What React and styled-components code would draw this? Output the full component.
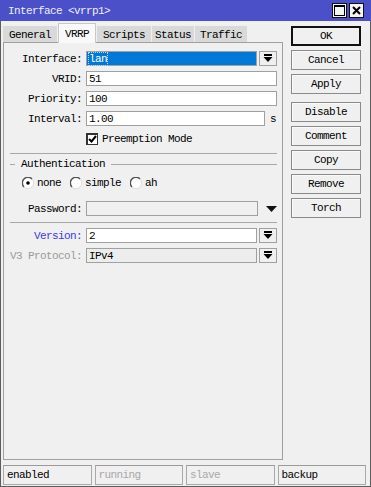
import React from "react";
import styled, { createGlobalStyle } from "styled-components";

const GlobalStyle = createGlobalStyle`
  html, body {
    margin: 0;
    padding: 0;
    background: #f0f0f0;
  }
  * {
    box-sizing: border-box;
  }
`;

const Window = styled.div`
  width: 371px;
  height: 487px;
  display: flex;
  flex-direction: column;
  background: #f0f0f0;
  border: 1px solid #5c5c5c;
  border-top: none;
  font-family: "Liberation Mono", "DejaVu Sans Mono", monospace;
  font-size: 11px;
  letter-spacing: -0.6px;
  color: #000;
`;

const TitleBar = styled.div`
  height: 21px;
  margin: 0 -1px;
  background: #4b50c9;
  color: #eef0ff;
  display: flex;
  align-items: center;
  padding: 0 7px 0 8px;
  font-size: 11px;
`;

const TitleText = styled.div`
  flex: 1;
`;

const TitleButtons = styled.div`
  display: flex;
  gap: 2px;
`;

const TitleButton = styled.div`
  width: 15px;
  height: 15px;
  border: 1px solid #111;
  background: #f4f4f4;
  display: flex;
  align-items: center;
  justify-content: center;
`;

const Main = styled.div`
  height: 441px;
  display: flex;
  padding: 2px 0 0 2px;
`;

const LeftCol = styled.div`
  width: 280px;
  display: flex;
  flex-direction: column;
`;

const Tabs = styled.div`
  height: 19px;
  display: flex;
  align-items: flex-end;
  gap: 1px;
  position: relative;
  z-index: 1;
`;

const Tab = styled.div`
  height: ${(p) => (p.$active ? "20px" : "16px")};
  margin-bottom: ${(p) => (p.$active ? "-1px" : "0")};
  padding: 0 ${(p) => p.$pad}px;
  display: flex;
  align-items: center;
  background: ${(p) => (p.$active ? "#f9f9f9" : "#d9d9d9")};
  border: ${(p) => (p.$active ? "1px solid #c8c8c8" : "none")};
  border-bottom: none;
  padding-top: ${(p) => (p.$active ? "0" : "1px")};
`;

const Panel = styled.div`
  height: 418px;
  border: 1px solid #a0a0a0;
  padding: 8px 5px 0 0;
`;

const Row = styled.div`
  display: flex;
  align-items: center;
  height: 15px;
  margin-top: ${(p) => p.$mt ?? 5}px;
`;

const Label = styled.div`
  width: 78px;
  margin-right: 4px;
  text-align: right;
  white-space: nowrap;
  color: ${(p) => p.$color || "#000"};
`;

const Input = styled.div`
  flex: 1;
  height: 15px;
  border: 1px solid #a0a0a0;
  background: ${(p) => p.$bg || "#fff"};
  color: ${(p) => (p.$selected ? "#fff" : "#000")};
  display: flex;
  align-items: center;
  padding-left: 2px;
  white-space: nowrap;
`;

const Selection = styled.span`
  background: #0078d7;
  flex: 1;
  height: 100%;
  display: flex;
  align-items: center;
  padding-left: 2px;
  margin-left: -2px;
`;

const Focus = styled.span`
  outline: 1px dotted #bcd6f0;
  outline-offset: 0;
`;

const DropButton = styled.div`
  width: 18px;
  height: 15px;
  margin-left: 2px;
  border: 1px solid #a0a0a0;
  background: #f0f0f0;
  display: flex;
  align-items: center;
  justify-content: center;
`;

const Unit = styled.div`
  width: 12px;
  text-align: right;
  padding-right: 1px;
`;

const TriangleSlot = styled.div`
  width: 19px;
  display: flex;
  justify-content: flex-end;
  align-items: center;
`;

const CheckRow = styled.div`
  display: flex;
  align-items: center;
  height: 15px;
  margin-top: 5px;
  padding-left: 82px;
  gap: 4px;
`;

const CheckBox = styled.div`
  width: 12px;
  height: 12px;
  border: 1px solid #333;
  border-top-width: 2px;
  border-left-width: 2px;
  background: #fff;
  display: flex;
  align-items: center;
  justify-content: center;
`;

const Separator = styled.div`
  height: 1px;
  background: #a8a8a8;
  margin: ${(p) => p.$mt}px 0 0 6px;
`;

const GroupHeader = styled.div`
  display: flex;
  align-items: center;
  height: 12px;
  margin-top: 4px;
  margin-left: 6px;
  gap: 6px;
`;

const GroupLine = styled.div`
  height: 1px;
  background: #a8a8a8;
  width: ${(p) => (p.$w ? `${p.$w}px` : "auto")};
  flex: ${(p) => (p.$w ? "none" : "1")};
`;

const RadioRow = styled.div`
  display: flex;
  align-items: center;
  height: 15px;
  margin-top: 5px;
  padding-left: 18px;
`;

const RadioItem = styled.div`
  display: flex;
  align-items: center;
  gap: 3px;
  margin-right: 9px;
`;

const RightCol = styled.div`
  display: flex;
  flex-direction: column;
  gap: 4px;
  padding-top: 3px;
  margin-left: 8px;
`;

const Button = styled.div`
  width: 70px;
  height: 20px;
  margin-top: ${(p) => (p.$gapTop ? "4px" : "0")};
  border: ${(p) => (p.$default ? "2px solid #111" : "1px solid #8a8a8a")};
  box-shadow: ${(p) => (p.$default ? "none" : "inset 1px 1px 0 #fafafa")};
  background: #f0f0f0;
  display: flex;
  align-items: center;
  justify-content: center;
`;

const StatusBar = styled.div`
  height: 24px;
  display: flex;
  gap: 3px;
  padding: 3px 4px 1px 2px;
`;

const StatusCell = styled.div`
  flex: 1;
  height: 20px;
  border: 1px solid #a9a9a9;
  border-top-color: #9a9a9a;
  display: flex;
  align-items: center;
  padding-left: 3px;
  color: ${(p) => (p.$dim ? "#a8a8a8" : "#000")};
`;

const DropIcon = () => (
  <svg width="10" height="9" viewBox="0 0 10 9">
    <rect x="1" y="0" width="8" height="2" fill="#000" />
    <polygon points="0.5,3 9.5,3 5,8" fill="#000" />
  </svg>
);

const Triangle = () => (
  <svg width="11" height="6" viewBox="0 0 11 6">
    <polygon points="0,0 11,0 5.5,6" fill="#111" />
  </svg>
);

const Radio = ({ checked }) => (
  <svg width="12" height="12" viewBox="0 0 12 12">
    <circle cx="6" cy="6" r="5.5" fill="#fff" />
    <path d="M10 2 A5.5 5.5 0 0 0 2 10" fill="none" stroke="#505050" strokeWidth="1.4" />
    <path d="M10 2 A5.5 5.5 0 0 1 2 10" fill="none" stroke="#dcdcdc" strokeWidth="1" />
    {checked && <circle cx="6" cy="6" r="1.8" fill="#000" />}
  </svg>
);

const Check = () => (
  <svg width="9" height="8" viewBox="0 0 9 8">
    <path d="M1 4 L3.5 6.5 L8 1" fill="none" stroke="#000" strokeWidth="2" />
  </svg>
);

const tabs = [
  { name: "General", pad: 6 },
  { name: "VRRP", pad: 6, active: true },
  { name: "Scripts", pad: 6 },
  { name: "Status", pad: 3 },
  { name: "Traffic", pad: 5 },
];

const buttons = ["OK", "Cancel", "Apply", "Disable", "Comment", "Copy", "Remove", "Torch"];

export default function App() {
  return (
    <>
      <GlobalStyle />
      <Window>
        <TitleBar>
          <TitleText>Interface &lt;vrrp1&gt;</TitleText>
          <TitleButtons>
            <TitleButton>
              <svg width="11" height="11" viewBox="0 0 11 11">
                <rect x="0.5" y="0.5" width="10" height="10" fill="none" stroke="#000" />
                <rect x="0.5" y="0.5" width="10" height="1.5" fill="#000" />
              </svg>
            </TitleButton>
            <TitleButton>
              <svg width="9" height="9" viewBox="0 0 9 9">
                <path d="M1 1 L8 8 M8 1 L1 8" stroke="#000" strokeWidth="2" />
              </svg>
            </TitleButton>
          </TitleButtons>
        </TitleBar>

        <Main>
          <LeftCol>
            <Tabs>
              {tabs.map((t) => (
                <Tab key={t.name} $active={t.active} $pad={t.pad}>
                  {t.name}
                </Tab>
              ))}
            </Tabs>
            <Panel>
              <Row $mt={0}>
                <Label>Interface:</Label>
                <Input $selected>
                  <Selection>
                    <Focus>lan</Focus>
                  </Selection>
                </Input>
                <DropButton>
                  <DropIcon />
                </DropButton>
              </Row>
              <Row>
                <Label>VRID:</Label>
                <Input>51</Input>
              </Row>
              <Row>
                <Label>Priority:</Label>
                <Input>100</Input>
              </Row>
              <Row>
                <Label>Interval:</Label>
                <Input>1.00</Input>
                <Unit>s</Unit>
              </Row>
              <CheckRow>
                <CheckBox>
                  <Check />
                </CheckBox>
                <span>Preemption Mode</span>
              </CheckRow>

              <Separator $mt={7} />

              <GroupHeader>
                <GroupLine $w={5} />
                <span>Authentication</span>
                <GroupLine />
              </GroupHeader>
              <RadioRow>
                <RadioItem>
                  <Radio checked />
                  <span>none</span>
                </RadioItem>
                <RadioItem>
                  <Radio />
                  <span>simple</span>
                </RadioItem>
                <RadioItem>
                  <Radio />
                  <span>ah</span>
                </RadioItem>
              </RadioRow>

              <Row $mt={11}>
                <Label>Password:</Label>
                <Input $bg="#f0f0f0" />
                <TriangleSlot>
                  <Triangle />
                </TriangleSlot>
              </Row>

              <Separator $mt={6} />

              <Row>
                <Label $color="#3a3ae8">Version:</Label>
                <Input>2</Input>
                <DropButton>
                  <DropIcon />
                </DropButton>
              </Row>
              <Row>
                <Label $color="#9a9a9a">V3 Protocol:</Label>
                <Input $bg="#ededed">IPv4</Input>
                <DropButton>
                  <DropIcon />
                </DropButton>
              </Row>
            </Panel>
          </LeftCol>

          <RightCol>
            {buttons.map((b) => (
              <Button key={b} $default={b === "OK"} $gapTop={b === "Disable"}>
                {b}
              </Button>
            ))}
          </RightCol>
        </Main>

        <StatusBar>
          <StatusCell>enabled</StatusCell>
          <StatusCell $dim>running</StatusCell>
          <StatusCell $dim>slave</StatusCell>
          <StatusCell>backup</StatusCell>
        </StatusBar>
      </Window>
    </>
  );
}
